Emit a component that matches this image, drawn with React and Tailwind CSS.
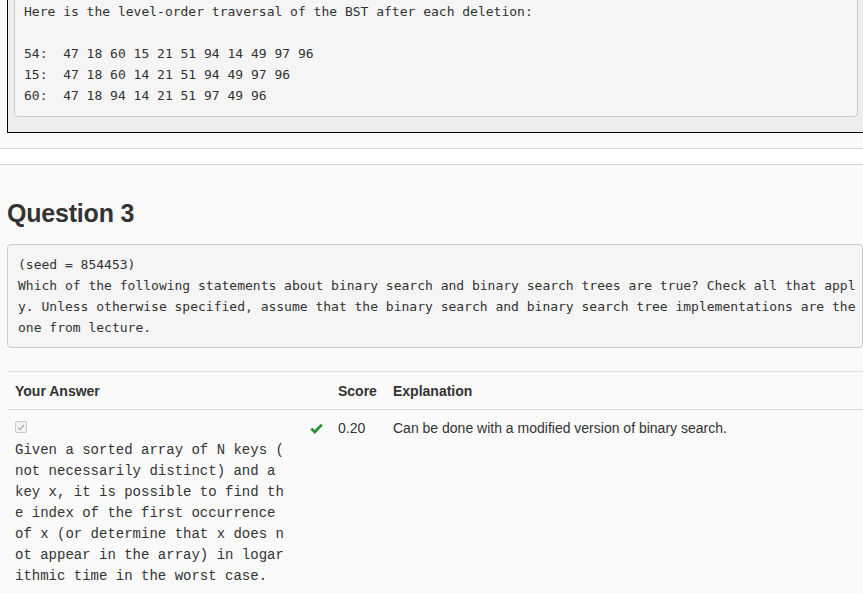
const traversal = [
  "Here is the level-order traversal of the BST after each deletion:",
  "",
  "54:  47 18 60 15 21 51 94 14 49 97 96",
  "15:  47 18 60 14 21 51 94 49 97 96",
  "60:  47 18 94 14 21 51 97 49 96",
]

const prompt = [
  "(seed = 854453)",
  "Which of the following statements about binary search and binary search trees are true? Check all that appl",
  "y. Unless otherwise specified, assume that the binary search and binary search tree implementations are the",
  "one from lecture.",
]

const answer = [
  "Given a sorted array of N keys (",
  "not necessarily distinct) and a",
  "key x, it is possible to find th",
  "e index of the first occurrence",
  "of x (or determine that x does n",
  "ot appear in the array) in logar",
  "ithmic time in the worst case.",
]

const mono = "font-['DejaVu_Sans_Mono',monospace] text-[13px] leading-[21px]"

const CheckMark = () => (
  <svg width="13" height="11" viewBox="0 0 13 11" className="mt-[5px]">
    <polyline points="1.3,5.6 4.8,9 11.8,1.6" fill="none" stroke="#24902f" strokeWidth="2.7" />
  </svg>
)

const DisabledCheckbox = () => (
  <div className="h-[22px] pt-[3px]">
    <div className="w-[12px] h-[12px] rounded-[2px] border border-[#c9c9c9] bg-[#f4f4f4] flex items-center justify-center">
      <svg width="8" height="7" viewBox="0 0 8 7">
        <polyline points="1,3.6 3,5.6 7,1" fill="none" stroke="#a8a8a8" strokeWidth="1.2" />
      </svg>
    </div>
  </div>
)

export default function App() {
  return (
    <div className="min-h-screen bg-[#fafafa] text-[#333] font-['Liberation_Sans',Arial,sans-serif] overflow-hidden">
      {/* previous question output */}
      <div className="ml-[7px] border-l border-b border-black bg-[#eeeeee] pl-[6px] pr-[5px] pb-[15px]">
        <pre className={`-mt-[10px] rounded-[4px] border border-[#cccccc] bg-[#f5f5f5] px-[9px] py-[10px] ${mono}`}>
          {traversal.map((line, i) => (
            <div key={i} className="h-[21px] whitespace-pre">{line}</div>
          ))}
        </pre>
      </div>

      <div className="mt-[15px] h-[17px] border-y border-[#d6d6d6] bg-white"></div>

      <h2 className="mt-[33px] ml-[7px] text-[25px] leading-[30px] font-bold tracking-[-0.2px] text-[#333]">Question 3</h2>

      <pre className={`mt-[16px] ml-[7px] rounded-[4px] border border-[#cccccc] bg-[#f5f5f5] pl-[10px] pr-[8px] py-[9px] ${mono}`}>
        {prompt.map((line, i) => (
          <div key={i} className="h-[21px] whitespace-pre">{line}</div>
        ))}
      </pre>

      <div className="mt-[23px] ml-[7px] text-[14px] leading-[20px]">
        <div className="grid grid-cols-[295px_28px_55px_1fr] border-t border-b border-[#dddddd] font-bold">
          <div className="px-[8px] pt-[9px] pb-[8px]">Your Answer</div>
          <div></div>
          <div className="px-[8px] pt-[9px] pb-[8px]">Score</div>
          <div className="px-[8px] pt-[9px] pb-[8px]">Explanation</div>
        </div>
        <div className="grid grid-cols-[295px_28px_55px_1fr]">
          <div className="px-[8px] pt-[8px]">
            <DisabledCheckbox />
            <div className="font-['Liberation_Mono','Courier_New',monospace] text-[14px] leading-[21px] text-[#333]">
              {answer.map((line, i) => (
                <div key={i} className="h-[21px] whitespace-pre">{line}</div>
              ))}
            </div>
          </div>
          <div className="pl-[8px] pt-[8px]">
            <CheckMark />
          </div>
          <div className="px-[8px] pt-[8px]">0.20</div>
          <div className="px-[8px] pt-[8px]">Can be done with a modified version of binary search.</div>
        </div>
      </div>
    </div>
  )
}
